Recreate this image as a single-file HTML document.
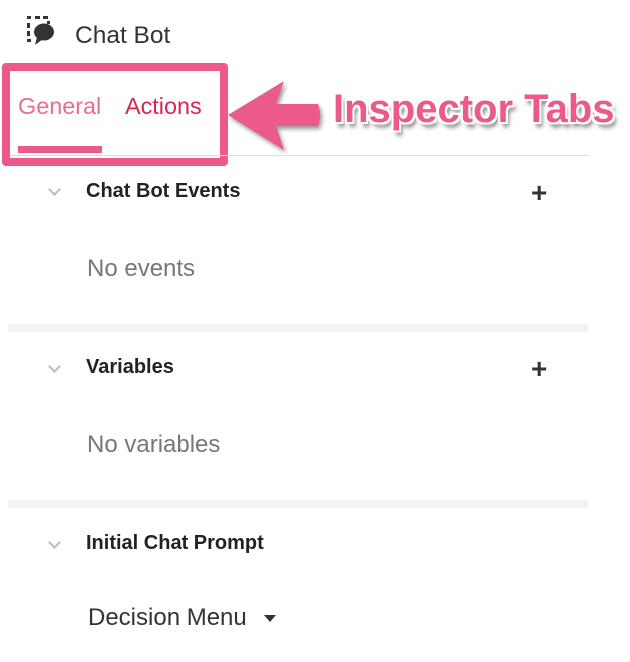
<!DOCTYPE html>
<html><head><meta charset="utf-8"><style>
body{margin:0;width:630px;height:662px;background:#fff;position:relative;overflow:hidden;font-family:"Liberation Sans",Arial,sans-serif}
.a{position:absolute;white-space:nowrap}
.hd{font-weight:bold;font-size:20px;color:#222}
.chev{position:absolute;width:7px;height:7px;border-right:2.5px solid #bbb;border-bottom:2.5px solid #bbb;transform:rotate(45deg)}
.plus{position:absolute;font-size:28px;font-weight:bold;color:#333;line-height:1}
.sub{font-size:24px;color:#777}
.band{position:absolute;left:8px;width:580px;height:8px;background:#f2f2f2}
</style></head><body>
<svg class="a" style="left:26px;top:15px" width="32" height="32" viewBox="0 0 32 32">
<g fill="#333"><rect x="1" y="1" width="4" height="3"/><rect x="9" y="1" width="5" height="3"/><rect x="17" y="1" width="5" height="3"/><rect x="1" y="8" width="3" height="5"/><rect x="1" y="16" width="3" height="5"/><rect x="1" y="24" width="4" height="3"/><rect x="21" y="6" width="3" height="3"/>
<ellipse cx="18" cy="17" rx="10" ry="8.5"/><path d="M11 22 L9 30 L17 24 Z"/></g></svg>
<div class="a" style="left:75px;top:22px;font-size:24.5px;color:#333">Chat Bot</div>

<div class="a" style="left:2px;top:63px;width:210px;height:87px;border:8px solid #eb5a88;border-radius:4px"></div>
<div class="a" style="left:10px;top:155px;width:578px;height:1px;background:#ddd"></div>
<div class="a" style="left:18px;top:93px;font-size:23.4px;color:#ea6c90">General</div>
<div class="a" style="left:125px;top:93px;font-size:23.4px;color:#d9254e">Actions</div>
<div class="a" style="left:18px;top:146px;width:84px;height:7px;background:#eb5a88"></div>

<svg class="a" style="left:226px;top:78px" width="100" height="76" viewBox="0 0 100 76">
<path d="M2 37 L58 3 L50 26 L92 26 Q96 37 92 48 L50 48 L58 72 Z" fill="#eb5a88" style="filter:drop-shadow(2px 3px 2px rgba(0,0,0,.4))"/></svg>
<div class="a" style="left:333px;top:87px;font-size:40px;font-weight:bold;color:#eb5a88;text-shadow:2px 0 #fff,-2px 0 #fff,0 2px #fff,0 -2px #fff,2px 2px #fff,-2px -2px #fff,2px -2px #fff,-2px 2px #fff,3px 5px 4px rgba(0,0,0,.5)">Inspector Tabs</div>

<div class="chev" style="left:50px;top:185px"></div>
<div class="a hd" style="left:86px;top:180px">Chat Bot Events</div>
<div class="plus" style="left:531px;top:179px">+</div>
<div class="a sub" style="left:87px;top:255px">No events</div>
<div class="band" style="top:324px"></div>

<div class="chev" style="left:50px;top:362px"></div>
<div class="a hd" style="left:86px;top:356px">Variables</div>
<div class="plus" style="left:531px;top:355px">+</div>
<div class="a sub" style="left:87px;top:431px">No variables</div>
<div class="band" style="top:500px"></div>

<div class="chev" style="left:50px;top:538px"></div>
<div class="a hd" style="left:86px;top:532px">Initial Chat Prompt</div>
<div class="a" style="left:88px;top:604px;font-size:24px;color:#333">Decision Menu</div>
<div class="a" style="left:264px;top:615px;width:0;height:0;border-left:6px solid transparent;border-right:6px solid transparent;border-top:7px solid #333"></div>
</body></html>
